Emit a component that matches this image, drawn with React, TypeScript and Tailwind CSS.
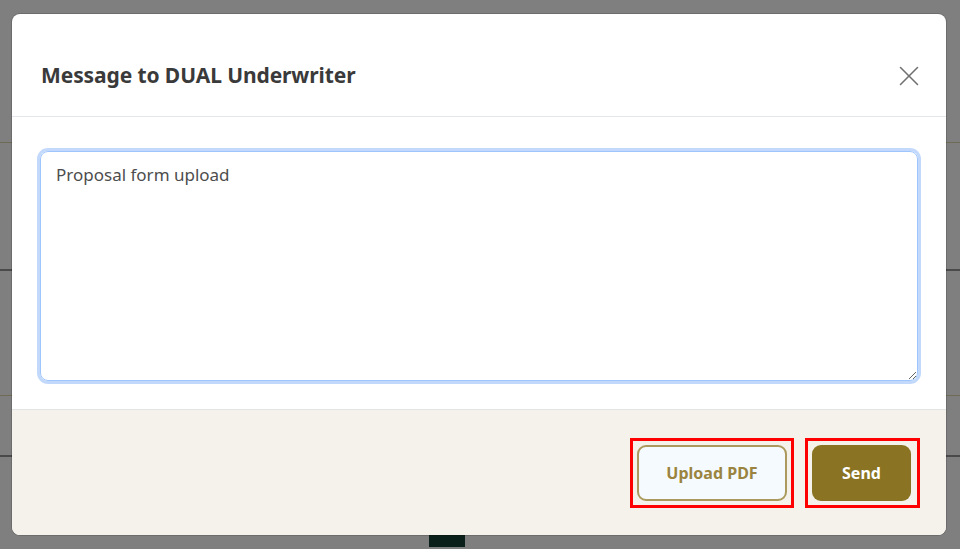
import { X } from 'lucide-react';

export default function App() {
  return (
    <div className="relative w-[960px] h-[549px] overflow-hidden bg-[#7f7f7f]" style={{ fontFamily: '"Noto Sans", sans-serif' }}>
      {/* page behind the backdrop */}
      <div className="flex flex-col">
        <div className="h-[143px] border-b border-[#6f6b55]" />
        <div className="h-[128px] border-b-2 border-[#4a4a4a]" />
        <div className="h-[125px] border-b border-[#6f6b55]" />
        <div className="h-[61px] border-b-2 border-[#4a4a4a]" />
        <div className="flex h-[90px] items-end pl-[429px]">
          <div className="w-[36px] h-[20px] bg-[#0b1f1a]" />
        </div>
      </div>

      {/* modal */}
      <div className="absolute left-[12px] top-[14px] w-[934px] h-[521px] flex flex-col rounded-[8px] bg-white overflow-hidden shadow-[0_0_0_1px_rgba(0,0,0,0.15)]">
        <div className="h-[103px] flex items-center justify-between pl-[29px] pr-[20px] pt-[22px] border-b border-[#e3e7eb] shrink-0">
          <h2 className="text-[21px] font-bold text-[#3a3a3a] tracking-[-0.1px]">Message to DUAL Underwriter</h2>
          <X className="w-[34px] h-[34px] text-[#707070]" strokeWidth={1.1} />
        </div>
        <div className="h-[292px] shrink-0 pt-[34px] pb-[28px] px-[28px]">
          <textarea
            className="block w-full h-[230px] resize-y rounded-[8px] border border-[#9ec5fe] ring-[3px] ring-[#c2d9fc] px-[15px] py-[10px] text-[17px] text-[#4d4d4d] outline-none"
            defaultValue="Proposal form upload"
          />
        </div>
        <div className="h-[126px] shrink-0 bg-[#f5f2eb] border-t border-[#e2e5e8] flex items-center justify-end gap-[11px] pr-[26px]">
          <div className="border-[3px] border-[#ff0000] p-[4px]">
            <button className="w-[150px] h-[56px] rounded-[9px] border-2 border-[#ab9a5c] bg-[#f4fafd] text-[16px] font-bold text-[#9a8440]">
              Upload PDF
            </button>
          </div>
          <div className="border-[3px] border-[#ff0000] py-[4px] pl-[4px] pr-[6px]">
            <button className="w-[99px] h-[56px] rounded-[9px] bg-[#8a7322] text-[16px] font-bold text-white">
              Send
            </button>
          </div>
        </div>
      </div>
    </div>
  );
}
